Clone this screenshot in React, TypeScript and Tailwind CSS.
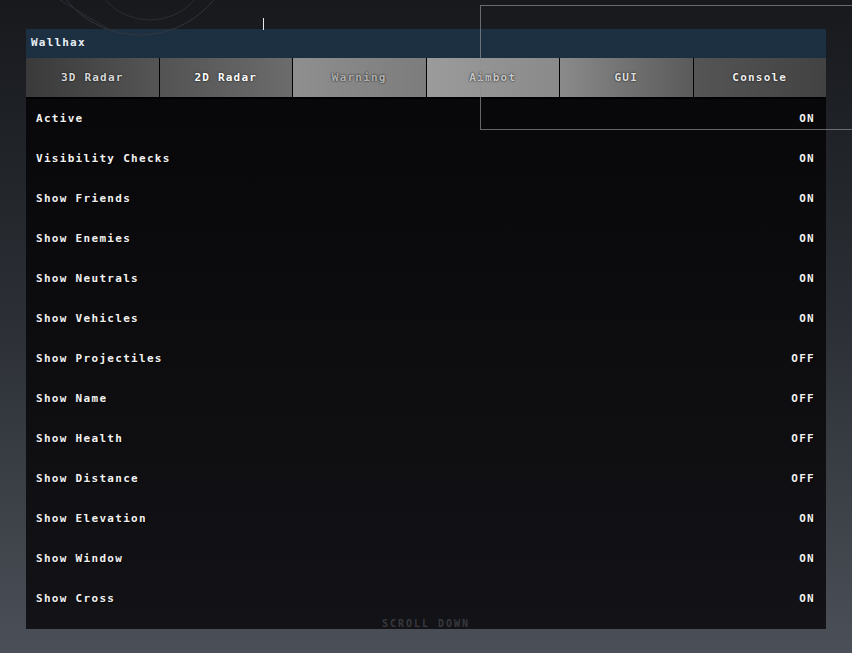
import React from 'react';

type Setting = { label: string; on: boolean };

const settings: Setting[] = [
  { label: 'Active', on: true },
  { label: 'Visibility Checks', on: true },
  { label: 'Show Friends', on: true },
  { label: 'Show Enemies', on: true },
  { label: 'Show Neutrals', on: true },
  { label: 'Show Vehicles', on: true },
  { label: 'Show Projectiles', on: false },
  { label: 'Show Name', on: false },
  { label: 'Show Health', on: false },
  { label: 'Show Distance', on: false },
  { label: 'Show Elevation', on: true },
  { label: 'Show Window', on: true },
  { label: 'Show Cross', on: true },
];

const tabs = [
  { label: '3D Radar', cls: 'bg-gradient-to-r from-[#3a3a3a] to-[#555555] text-[#d8d8d8]' },
  { label: '2D Radar', cls: 'bg-gradient-to-r from-[#535353] to-[#6c6c6c] text-white' },
  { label: 'Warning', cls: 'bg-gradient-to-r from-[#8f8f8f] to-[#7c7c7c] text-[#b0b0b0]' },
  { label: 'Aimbot', cls: 'bg-gradient-to-r from-[#9b9b9b] to-[#8a8a8a] text-[#c6c6c6]' },
  { label: 'GUI', cls: 'bg-gradient-to-r from-[#8a8a8a] to-[#5a5a5a] text-[#dcdcdc]' },
  { label: 'Console', cls: 'bg-gradient-to-r from-[#555555] to-[#424242] text-[#eeeeee]' },
];

const mono = "font-['DejaVu_Sans_Mono',monospace]";

const App: React.FC = () => {
  return (
    <div className={`relative w-[852px] h-[653px] overflow-hidden bg-gradient-to-b from-[#17191d] via-[#2c3036] to-[#4b5058] ${mono}`}>
      {/* faint arcs in background */}
      <svg className="absolute left-0 top-0" width="300" height="60" viewBox="0 0 300 60">
        <circle cx="140" cy="-60" r="95" fill="none" stroke="#32363d" strokeWidth="1" />
        <circle cx="150" cy="-40" r="60" fill="none" stroke="#2a2e34" strokeWidth="1" />
        <line x1="60" y1="0" x2="110" y2="30" stroke="#2a2e34" strokeWidth="1" />
      </svg>
      <div className="absolute left-[263px] top-[18px] w-px h-[12px] bg-white/90" />

      <div className="pt-[29px] pl-[26px]">
        <div className="w-[800px] flex flex-col">
          <div className="h-[29px] shrink-0 bg-[#1d3042] flex items-center pl-[5px] text-[11px] font-bold tracking-[1.2px] text-[#e8eef3]">
            Wallhax
          </div>
          <div className="flex h-[41px] shrink-0 border-b-2 border-black">
            {tabs.map((t, i) => (
              <div
                key={t.label}
                className={`flex-1 flex items-center justify-center pt-[2px] text-[11px] font-bold tracking-[1.2px] [text-shadow:0_0_2px_#000] ${t.cls} ${i > 0 ? 'border-l border-black' : ''}`}
              >
                {t.label}
              </div>
            ))}
          </div>
          <div className="h-[530px] shrink-0 bg-gradient-to-b from-[#08080a] to-[#131317] flex flex-col">
            {settings.map((s) => (
              <div key={s.label} className="h-[40px] shrink-0 flex items-center justify-between pl-[10px] pr-[11px] text-[11px] font-bold tracking-[1.3px] text-[#f2f2f2] [text-shadow:1px_1px_1px_#000]">
                <span>{s.label}</span>
                <span>{s.on ? 'ON' : 'OFF'}</span>
              </div>
            ))}
            <div className="flex-1 flex items-center justify-center text-[10px] leading-none font-bold tracking-[2px] text-[#36393f]">
              SCROLL DOWN
            </div>
          </div>
        </div>
      </div>

      {/* outline rectangle from another window */}
      <div className="absolute left-[480px] top-[5px] w-[380px] h-[125px] border border-[#8a8f96]/70 pointer-events-none" />
    </div>
  );
};

export default App;
